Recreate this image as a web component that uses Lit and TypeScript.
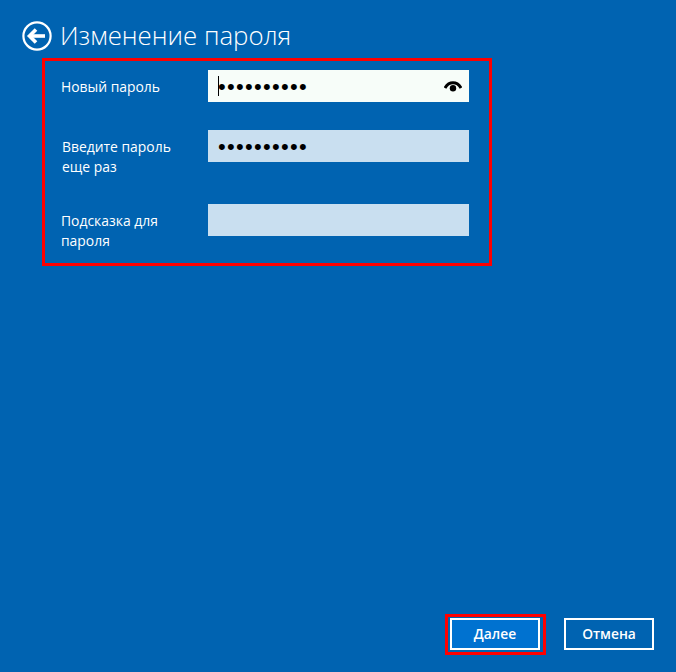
import { LitElement, html, css } from "lit";
import { customElement } from "lit/decorators.js";

@customElement("app-root")
export class AppRoot extends LitElement {
  static styles = css`
    :host {
      display: flex;
      flex-direction: column;
      box-sizing: border-box;
      width: 676px;
      height: 672px;
      background: #0063b1;
      color: #fff;
      font-family: "Open Sans", "Noto Sans", sans-serif;
      overflow: hidden;
    }
    .header {
      display: flex;
      align-items: flex-start;
      gap: 8px;
      padding: 21px 0 0 22px;
      height: 37px;
    }
    .back { width: 30px; height: 30px; display: block; }
    .title { font-size: 25.8px; line-height: 28px; font-weight: 300; white-space: nowrap; }
    .form {
      box-sizing: border-box;
      width: 450px;
      height: 208px;
      margin: 0 0 0 42px;
      border: 3px solid #f00;
      padding: 9px 20px 0 16px;
      display: grid;
      grid-template-columns: 147px 261px;
      grid-template-rows: 32px 32px 32px;
      row-gap: 28px;
      align-content: start;
    }
    .label { font-size: 13.9px; line-height: 20px; white-space: nowrap; }
    .label.one { align-self: center; padding-top: 1px; }
    .label.shift { padding-left: 1px; padding-top: 7px; }
    .label.hint { padding-top: 7px; margin-top: 14px; }
    .input {
      position: relative;
      display: flex;
      align-items: center;
      padding-left: 10px;
      height: 32px;
      background: #c9dff0;
      color: #000;
    }
    .input.hint { margin-top: 14px; }
    .input.focus { background: #f7fdf9; }
    .dots {
      font-family: "Liberation Sans", sans-serif;
      font-size: 22px;
      letter-spacing: 1.3px;
      line-height: 32px;
      margin-top: 2px;
      white-space: nowrap;
    }
    .caret {
      position: absolute;
      left: 10px;
      top: 6px;
      width: 1px;
      height: 20px;
      background: #000;
    }
    .eye { position: absolute; right: 7px; top: 9px; width: 18px; height: 14px; }
    .footer {
      margin-top: auto;
      display: flex;
      justify-content: flex-end;
      align-items: flex-end;
      gap: 18px;
      padding: 0 22px 17px 0;
    }
    .outline { display: flex; border: 3px solid #f00; padding: 1px 3px 2px 2px; }
    .btn {
      box-sizing: border-box;
      width: 90px;
      height: 32px;
      border: 2px solid #fff;
      background: #0063b1;
      color: #fff;
      font: 600 13.8px/28px "Open Sans", "Noto Sans", sans-serif;
      padding: 0;
    }
    .btn.primary { background: #0072d0; }
    .btn.cancel { margin-bottom: 5px; }
  `;

  render() {
    return html`
      <div class="header">
        <svg class="back" viewBox="0 0 30 30" fill="none" stroke="#fff">
          <circle cx="15" cy="15" r="13.6" stroke-width="2.2"></circle>
          <path d="M8 15H23" stroke-width="3.6"></path>
          <path d="M14 8.5L7.5 15L14 21.5" stroke-width="3.6"></path>
        </svg>
        <div class="title">Изменение пароля</div>
      </div>
      <div class="form">
        <div class="label one">Новый пароль</div>
        <div class="input focus">
          <span class="dots">••••••••••</span>
          <span class="caret"></span>
          <svg class="eye" viewBox="0 0 18 14">
            <path d="M1 9C5 2 13 2 17 9" fill="none" stroke="#000" stroke-width="3"></path>
            <circle cx="9" cy="9.2" r="3.2" fill="#000"></circle>
          </svg>
        </div>
        <div class="label shift">Введите пароль<br />еще раз</div>
        <div class="input"><span class="dots">••••••••••</span></div>
        <div class="label hint">Подсказка для<br />пароля</div>
        <div class="input hint"></div>
      </div>
      <div class="footer">
        <div class="outline"><button class="btn primary">Далее</button></div>
        <button class="btn cancel">Отмена</button>
      </div>
    `;
  }
}
